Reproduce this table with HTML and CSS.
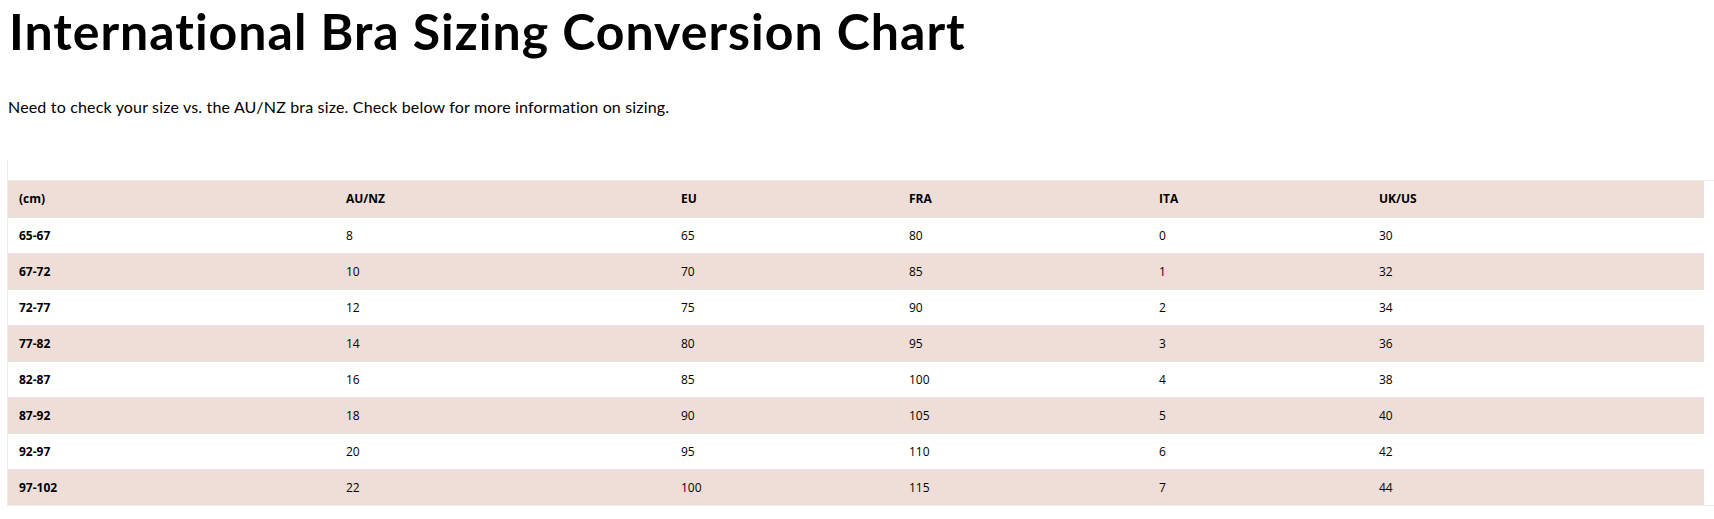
FILE: index.html
```html
<!DOCTYPE html>
<html lang="en">
<head>
<meta charset="utf-8">
<title>International Bra Sizing Conversion Chart</title>
<link rel="stylesheet" href="styles.css">
</head>
<body>
<main class="page">
  <h1 class="title">International Bra Sizing Conversion Chart</h1>
  <p class="intro">Need to check your size vs. the AU/NZ bra size. Check below for more information on sizing.</p>
  <div class="chart">
    <div class="frame">
      <table class="sizes">
        <thead>
          <tr class="row alt">
            <th>(cm)</th><th>AU/NZ</th><th>EU</th><th>FRA</th><th>ITA</th><th>UK/US</th>
          </tr>
        </thead>
        <tbody>
          <tr class="row"><th>65-67</th><td>8</td><td>65</td><td>80</td><td>0</td><td>30</td></tr>
          <tr class="row alt"><th>67-72</th><td>10</td><td>70</td><td>85</td><td>1</td><td>32</td></tr>
          <tr class="row"><th>72-77</th><td>12</td><td>75</td><td>90</td><td>2</td><td>34</td></tr>
          <tr class="row alt"><th>77-82</th><td>14</td><td>80</td><td>95</td><td>3</td><td>36</td></tr>
          <tr class="row"><th>82-87</th><td>16</td><td>85</td><td>100</td><td>4</td><td>38</td></tr>
          <tr class="row alt"><th>87-92</th><td>18</td><td>90</td><td>105</td><td>5</td><td>40</td></tr>
          <tr class="row"><th>92-97</th><td>20</td><td>95</td><td>110</td><td>6</td><td>42</td></tr>
          <tr class="row alt"><th>97-102</th><td>22</td><td>100</td><td>115</td><td>7</td><td>44</td></tr>
        </tbody>
      </table>
    </div>
  </div>
</main>
</body>
</html>
```

FILE: styles.css
```css
html, body {
  margin: 0;
  padding: 0;
  background: #ffffff;
}

body {
  padding: 0 8px;
  color: #000;
}

.page {
  display: flex;
  flex-direction: column;
}

.title {
  margin: 0;
  padding-top: 1px;
  padding-left: 1px;
  font-family: "Lato", "Noto Sans", sans-serif;
  font-weight: 700;
  font-size: 50px;
  line-height: 60px;
  letter-spacing: 1px;
}

.intro {
  margin: 36px 0 0 0;
  font-family: "Lato", "Noto Sans", sans-serif;
  font-size: 16px;
  line-height: 20px;
  letter-spacing: 0.17px;
}

.chart {
  margin-top: 43px;
  margin-left: -1px;
  margin-right: -8px;
  padding-top: 20px;
  border-left: 1px solid #ececec;
}

.frame {
  border-top: 1px solid #ececec;
  border-bottom: 1px solid #ececec;
}

.sizes {
  width: 1696px;
  border-collapse: collapse;
  table-layout: fixed;
  font-family: "Open Sans", "Noto Sans", sans-serif;
  font-size: 12px;
}

.sizes th,
.sizes td {
  height: 36px;
  padding: 0 0 0 11px;
  text-align: left;
  vertical-align: middle;
  box-sizing: border-box;
}

.sizes th {
  font-weight: 700;
}

.sizes td {
  font-weight: 400;
}

tbody .row {
  border-top: 1px solid #e6e6e6;
}

.row.alt {
  background: #efddd8;
}

.sizes tr > :nth-child(1) { width: 327px; }
.sizes tr > :nth-child(2) { width: 335px; }
.sizes tr > :nth-child(3) { width: 228px; }
.sizes tr > :nth-child(4) { width: 250px; }
.sizes tr > :nth-child(5) { width: 220px; }
.sizes tr > :nth-child(6) { width: 336px; }
```
